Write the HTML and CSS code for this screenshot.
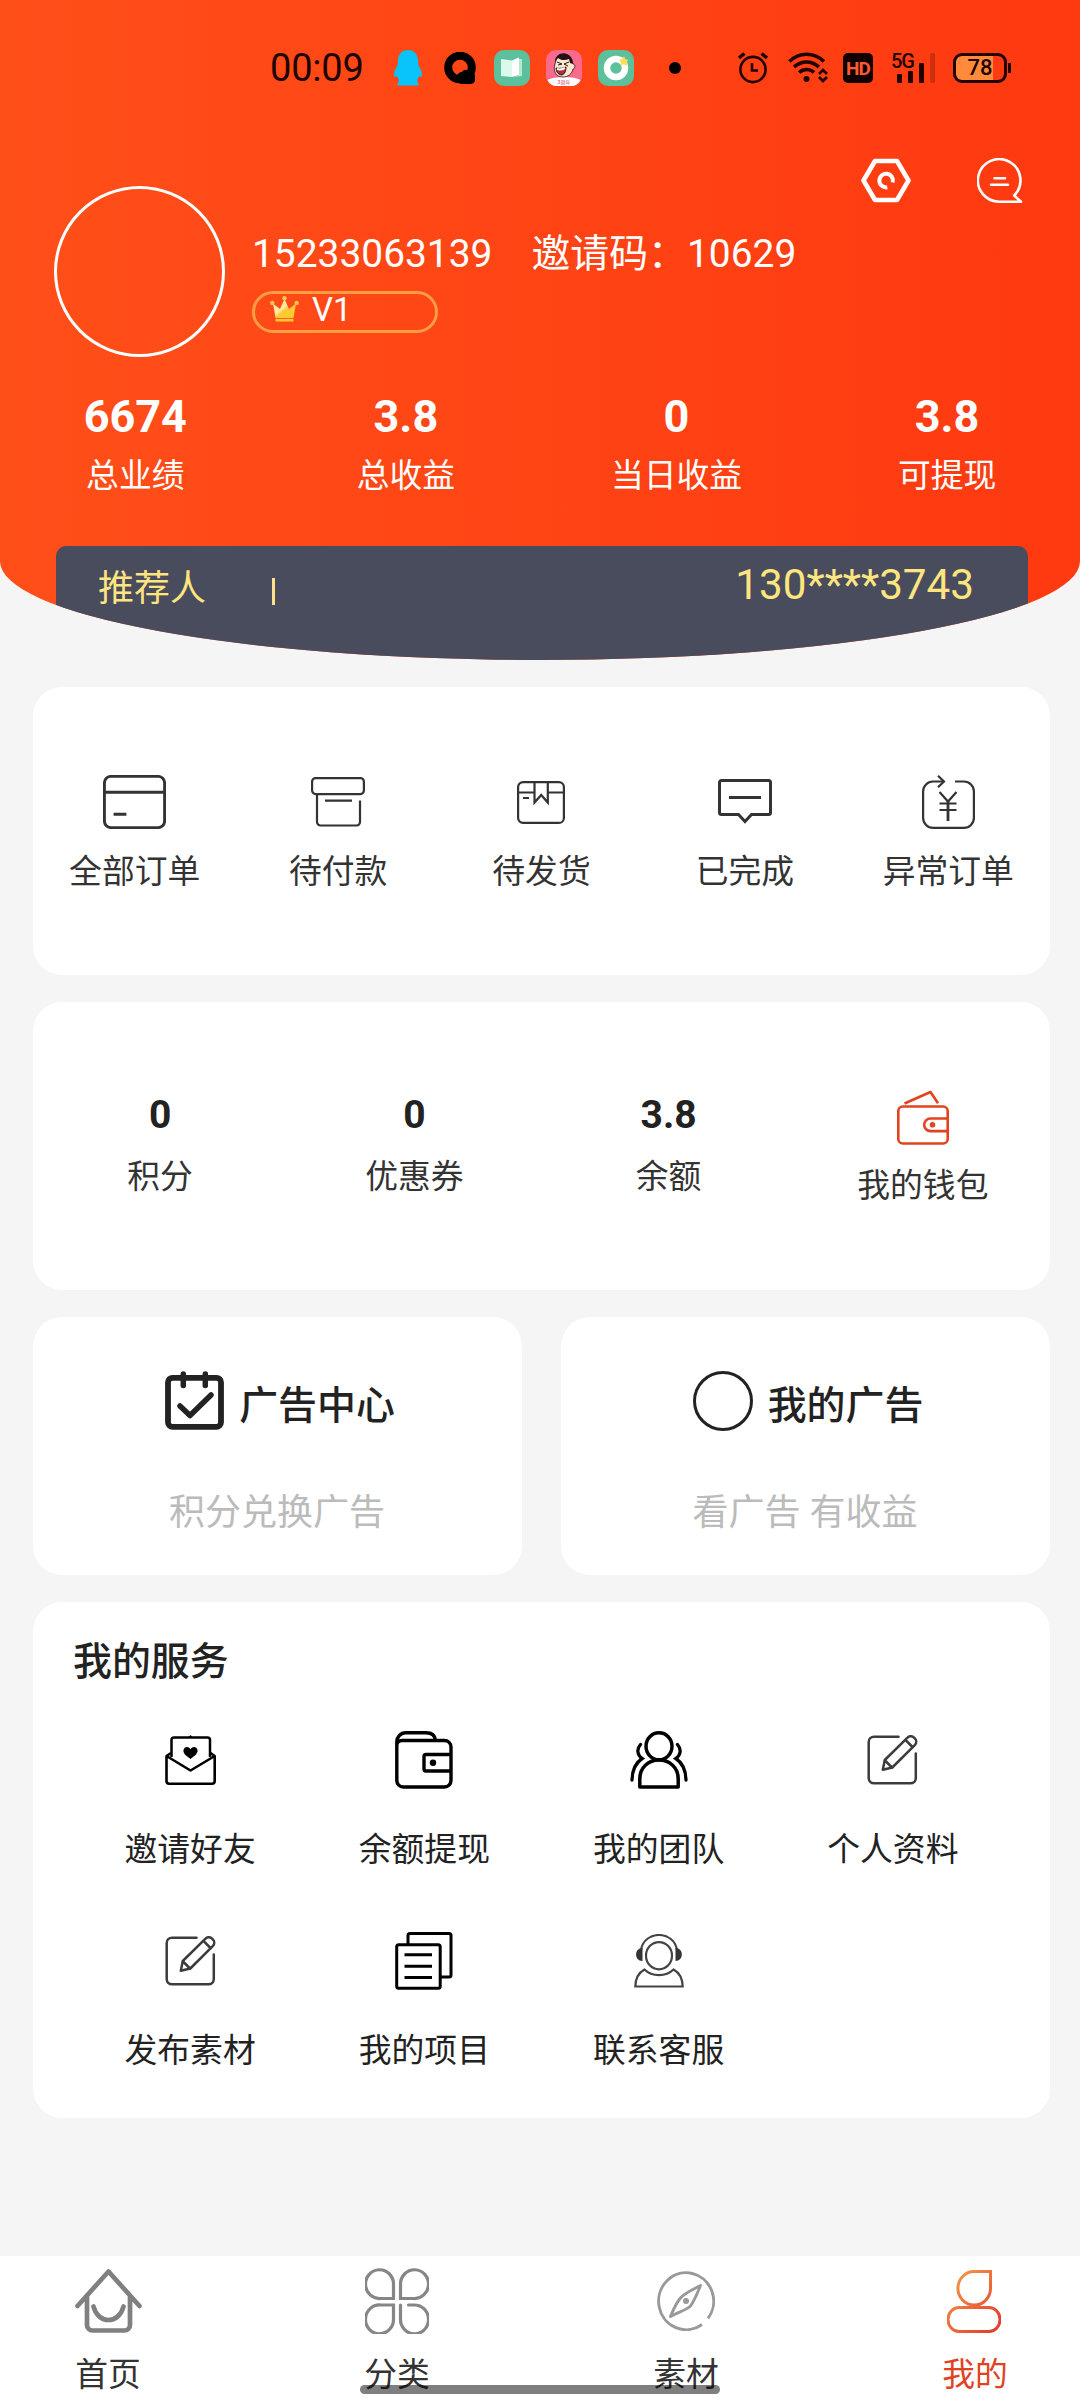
FILE: index.html
```html
<!DOCTYPE html>
<html lang="zh-CN">
<head>
<meta charset="utf-8">
<title>我的</title>
<link rel="stylesheet" href="styles.css">
</head>
<body>
<svg class="defs" width="0" height="0">
  <defs>
    <linearGradient id="me" x1="0" y1="0" x2="1" y2="1"><stop offset="0" stop-color="#f5a04a"/><stop offset="1" stop-color="#e2382c"/></linearGradient>
    <linearGradient id="gold" x1="0" y1="0" x2="1" y2="1"><stop offset="0.45" stop-color="#ffe9a0"/><stop offset="0.55" stop-color="#ffc933"/></linearGradient>
    <symbol id="edit" viewBox="0 0 51 50"><g fill="none" stroke="#3c3c3c" stroke-width="2.500" stroke-linecap="round" stroke-linejoin="round"><path d="M31.500 1.700H7a5.300 5.300 0 0 0-5.300 5.300V43a5.300 5.300 0 0 0 5.300 5.300H43.500a5.300 5.300 0 0 0 5.300-5.300V18.500"/><path d="M15.800 34.800 17.800 25 40.500 2.600a4.500 4.500 0 0 1 6.500 0l1 1a4.500 4.500 0 0 1 0 6.200L25.300 32.500Z"/><path d="M38.700 5.200 45.500 12M18 25.500l7 7"/></g></symbol>
  </defs>
</svg>

<header class="header">
  <div class="status">
    <span class="clock">00:09</span>
    <svg class="st-qq" width="30" height="36" viewBox="0 0 30 36" fill="#08c4f8"><path d="M15 0c6 0 9.500 4 10 10l.3 5c2 3 4 7.500 3.700 11-.3 1.300-1.500 1-3 0l-2 4.500 1.500 3.500v1.500H4.500V34L6 30.500 4 26c-1.500 1-2.700 1.300-3 0-.3-3.500 1.700-8 3.700-11L5 10C5.500 4 9 0 15 0Z"/></svg>
    <svg class="st-q" width="32" height="32" viewBox="0 0 32 32"><circle cx="16" cy="15.500" r="11.800" fill="none" stroke="#000" stroke-width="8"/><path d="M13 25c0-3 2.500-5 5-5 1-2.500 6-3.500 8 0 3 0 5 2 5 4v4c0 3-3 4-5 4H16Z"/></svg>
    <svg class="st-app" width="36" height="36" viewBox="0 0 36 36"><rect width="36" height="36" rx="10" fill="#5cc09c"/><path d="M7 9l11 1.500V27L7 26Z" fill="#ddf9ec"/><path d="M18 10.500 25 7.500V25l-7 2Z" fill="#fff"/><path d="M25 9h3v17l-10 1 7-2Z" fill="#b5e9cf"/></svg>
    <svg class="st-app" width="36" height="36" viewBox="0 0 36 36"><rect width="36" height="36" rx="10" fill="#fa6a8c"/><path d="M1.500 30C8 26 28 26 34.500 30c-2 4-5 6-9 6h-15c-4 0-7-2-9-6Z" fill="#fff"/><path d="M10 10c0-7 14-8 16 0l1 4c3 0 2 5 0 5-1 5-5 8-10 8C9 27 7 20 9 14Z" fill="#ffe7cf" stroke="#221214" stroke-width=".8"/><path d="M9 12C9 1 26-1 27 14l-3-1-1-4c-4 2-9 1-11-1Z" fill="#221214"/><path d="M11 12l5 2-4 1M23 12l-5 2 4 2" fill="none" stroke="#221214"/><path d="M10 18c4 1 7 0 10-1 0 5-2 8-5 8-3-1-5-3-5-7Z" fill="#b52d3a" stroke="#221214"/><path d="M11 19c3 1 6 0 8-1" stroke="#fff" stroke-width="2" fill="none"/><text x="18" y="33.500" text-anchor="middle" class="tiny">3周年</text></svg>
    <svg class="st-app" width="36" height="36" viewBox="0 0 36 36"><rect width="36" height="36" rx="10" fill="#5cc09c"/><circle cx="18" cy="18" r="9" fill="none" stroke="#fff" stroke-width="6.500"/><path d="M26 6l1.500 3.300 3 .5-2 2.400.5 3.500-3.500-1.500-3 1.500.5-3.500-2-2.700 3.300-.5Z" fill="#f9dd55"/></svg>
    <i class="st-dot"></i>
    <svg class="st-alarm" width="30" height="32" viewBox="0 0 30 32" fill="none" stroke="#200300" stroke-width="2.600"><circle cx="15" cy="17.500" r="12.600"/><path d="M14 11v7.500h6"/><path d="M1 6 6.500 1.500M29 6 23.500 1.500" stroke-width="3.500"/></svg>
    <svg class="st-wifi" width="40" height="32" viewBox="0 0 40 32" fill="none" stroke="#200300" stroke-width="3.600"><path d="M1.500 9.500C11-.2 26-.2 36 9.500M6 15C14 8.500 23 8.500 31 15M11 20.500c4.500-4 11-4 15 0"/><circle cx="18.500" cy="27" r="3" fill="#200300" stroke="none"/><path d="m31 22 4-4 4 4M31 25l4 4 4-4" stroke-width="2.800"/></svg>
    <span class="st-hd">HD</span>
    <svg class="st-sig" width="46" height="32" viewBox="0 0 46 32"><text x="0" y="16" class="five-g">5G</text><g fill="#200300"><rect x="6" y="22" width="5" height="9" rx="1"/><rect x="17" y="19" width="5" height="12" rx="1"/><rect x="28" y="11" width="5" height="20" rx="1"/><rect x="39" y="1" width="5" height="30" rx="1" opacity=".22"/></g></svg>
    <span class="st-batt">78</span><i class="st-nub"></i>
  </div>

  <div class="actions">
    <svg width="50" height="45" viewBox="0 0 50 45" fill="none" stroke="#fff" stroke-width="4.600" stroke-linejoin="round"><path d="M14 3H36L47.500 22.500 36 42H14L2.500 22.500Z"/><path d="M26.300 29.300A6.800 6.800 0 1 1 31.700 24.500" stroke-width="4" stroke-linecap="butt"/></svg>
    <svg width="46" height="45" viewBox="0 0 46 45" fill="none" stroke="#fff" stroke-width="2.600" stroke-linejoin="round" stroke-linecap="round"><path d="M37.200 37.500A21.300 21.300 0 1 0 23 43.700H44L37.200 37.500M17.500 20.300H28M14 26.700H31"/></svg>
  </div>

  <div class="profile">
    <div class="avatar"></div>
    <div class="info">
      <div class="ids"><span>15233063139</span><span>邀请码：10629</span></div>
      <div class="level">
        <svg width="29" height="26" viewBox="0 0 29 26"><path d="M3 7.500l7 5.500 4.500-10L19 13l7-5.500L23.500 22h-18Z" fill="url(#gold)"/><g fill="#ffc84a"><circle cx="2.300" cy="7" r="2.200"/><circle cx="14.500" cy="2.300" r="2.200"/><circle cx="26.700" cy="7" r="2.200"/></g><path d="M5.500 22.800h18v2.700h-18z" fill="#ffc933"/></svg>
        <span>V1</span>
      </div>
    </div>
  </div>

  <div class="stats">
    <div><b>6674</b><span>总业绩</span></div>
    <div><b>3.8</b><span>总收益</span></div>
    <div><b>0</b><span>当日收益</span></div>
    <div><b>3.8</b><span>可提现</span></div>
  </div>

  <div class="referrer"><span class="who">推荐人</span><i class="sep"></i><span class="phone">130****3743</span></div>
</header>

<main class="main">
  <section class="card orders">
    <div class="cell"><div class="ico"><svg width="63" height="54" viewBox="0 0 63 54" fill="none" stroke="#333" stroke-width="2.900"><rect x="1.400" y="1.400" width="60.200" height="51.200" rx="6.500"/><path d="M1 17.300H62M10.600 39.300H23.400"/></svg></div><span>全部订单</span></div>
    <div class="cell"><div class="ico"><svg width="54" height="50" viewBox="0 0 54 50" fill="none" stroke="#333" stroke-width="2.200"><rect x="1.100" y="1.100" width="51.800" height="16" rx="3.500"/><path d="M6 17V45a3.500 3.500 0 0 0 3.500 3.500H45.500A3.500 3.500 0 0 0 49 45V23.500M14 23.700H41"/></svg></div><span>待付款</span></div>
    <div class="cell"><div class="ico"><svg width="48" height="43" viewBox="0 0 48 43" fill="none" stroke="#333" stroke-width="2.200"><rect x="1.100" y="1.100" width="45.800" height="40.800" rx="5"/><path d="M1 11.500H17M31 11.500H47M17.500 1V21.500L24.200 14 30.800 21.500V1M6 17H12"/></svg></div><span>待发货</span></div>
    <div class="cell"><div class="ico"><svg width="54" height="46" viewBox="0 0 54 46" fill="none" stroke="#333" stroke-width="3"><path d="M20.500 35.500H3.500a2 2 0 0 1-2-2V3.500a2 2 0 0 1 2-2H50.500a2 2 0 0 1 2 2V33.500a2 2 0 0 1-2 2H33.500L27 42.500ZM11 18.500H43"/></svg></div><span>已完成</span></div>
    <div class="cell"><div class="ico"><svg width="53" height="54" viewBox="0 0 53 54" fill="none" stroke="#333" stroke-width="2.200"><path d="M22 6.500H11A10 10 0 0 0 1.100 16.500V43a10 10 0 0 0 10 9.900H42A10 10 0 0 0 51.900 43V16.500A10 10 0 0 0 42 6.500H33"/><path d="M16 .8 22 6.500 16 12.200M17.500 17 26 26.500 34.500 17M17.500 28.500H34.500M17.500 35H34.500"/><path d="M26 26V46" stroke-width="2.800"/></svg></div><span>异常订单</span></div>
  </section>

  <section class="card assets">
    <div class="cell"><b>0</b><span>积分</span></div>
    <div class="cell"><b>0</b><span>优惠券</span></div>
    <div class="cell"><b>3.8</b><span>余额</span></div>
    <div class="cell wallet"><svg width="52" height="55" viewBox="0 0 52 55" fill="none" stroke="#e2431f" stroke-width="2.600"><rect x="1.300" y="16.500" width="49.400" height="37" rx="4.500"/><path d="M7.500 13.500 33.500 2 41 13.200M50.500 28.500H33.500a6.300 6.300 0 0 0 0 12.600H50.500" stroke-linejoin="round"/><circle cx="35.500" cy="34.800" r="2.800" fill="#e2431f" stroke="none"/></svg><span>我的钱包</span></div>
  </section>

  <section class="ads">
    <div class="card ad">
      <div class="ad-title"><svg width="59" height="60" viewBox="0 0 59 60" fill="none" stroke="#222" stroke-width="5.800" stroke-linecap="round" stroke-linejoin="round"><rect x="3" y="6.800" width="53" height="49" rx="4.500"/><path d="M18.300 3V14.500M40.300 3V14.500M15 35 25 44.500 46 24" stroke-width="5.500"/></svg><h3>广告中心</h3></div>
      <p>积分兑换广告</p>
    </div>
    <div class="card ad">
      <div class="ad-title"><i class="ring"></i><h3>我的广告</h3></div>
      <p>看广告 有收益</p>
    </div>
  </section>

  <section class="card services">
    <h3>我的服务</h3>
    <div class="grid">
      <div class="svc"><div class="ico"><svg width="51" height="50" viewBox="0 0 51 50" fill="none" stroke="#000" stroke-width="2.500" stroke-linejoin="round"><path d="M6.500 22V5a2.500 2.500 0 0 1 2.500-2.500H42.500A2.500 2.500 0 0 1 45 5V22"/><path d="M6 18 1.500 21V46a2.700 2.700 0 0 0 2.700 2.700H47A2.700 2.700 0 0 0 49.700 46V21L45.500 18M1.500 21 25.500 35.500 49.700 21" stroke-width="2.600"/><path d="M25.500 24C20 20 18 18 18.500 15c.7-3.500 5-4 7-.8 2-3.200 6.300-2.700 7 .8.500 3-1.500 5-7 9ZM23.500 2h4l-2-2Z" fill="#000" stroke="none"/></svg></div><span>邀请好友</span></div>
      <div class="svc"><div class="ico"><svg width="58" height="58" viewBox="0 0 58 58" fill="none" stroke="#000" stroke-width="3.400"><path d="M1.800 14V49.500a6.500 6.500 0 0 0 6.500 6.500H49.500a6.500 6.500 0 0 0 6.500-6.500V16a6.500 6.500 0 0 0-6.500-6.500H7C3.500 9.500 2 12 1.800 14ZM1.800 15V11A9 9 0 0 1 10.800 1.800H31C37 1.800 40 4 40.500 9.500M56 23.500H31a2 2 0 0 0-2 2V38a2 2 0 0 0 2 2H56"/><circle cx="38" cy="31.800" r="3.200" fill="#000" stroke="none"/></svg></div><span>余额提现</span></div>
      <div class="svc"><div class="ico"><svg width="58" height="58" viewBox="0 0 58 58" fill="none" stroke="#000" stroke-width="3.500" stroke-linecap="round"><ellipse cx="29" cy="15.300" rx="13" ry="13.500"/><path d="M9.800 56H48.200V48C48.200 36 39 29 29 29S9.800 36 9.800 48Z" stroke-linejoin="round"/><path d="M10.500 13.500C6.500 18 7 24 12.200 27.500 6 31.500 2.200 39 2 49M47.500 13.500C51.500 18 51 24 45.800 27.500 52 31.500 55.800 39 56 49" stroke-width="3.300"/></svg></div><span>我的团队</span></div>
      <div class="svc"><div class="ico"><svg width="51" height="50"><use href="#edit"/></svg></div><span>个人资料</span></div>
      <div class="svc"><div class="ico"><svg width="51" height="50"><use href="#edit"/></svg></div><span>发布素材</span></div>
      <div class="svc"><div class="ico"><svg width="58" height="58" viewBox="0 0 58 58" fill="none" stroke="#000" stroke-width="3"><path d="M13 12.500V3.500a2 2 0 0 1 2-2H54a2 2 0 0 1 2 2V43a2 2 0 0 1-2 2H46"/><rect x="1.700" y="12.700" width="43.500" height="43.500" rx="2"/><path d="M9.500 22.800H37M9.500 34.300H37M9.500 45.600H37"/></svg></div><span>我的项目</span></div>
      <div class="svc"><div class="ico"><svg width="50" height="54" viewBox="0 0 50 54" fill="none" stroke="#444" stroke-width="2.200"><ellipse cx="25" cy="21.700" rx="13" ry="13.600"/><path d="M7 16C10-4 40-4 43 16M1.300 52.500C1.500 44 5 38.500 10.500 35.500 18 43 32 43 39.500 35.500 45 38.500 48.500 44 48.700 52.500Z"/><path d="M8.500 14V27C0 27 0 14 8.500 14ZM41.500 14V27C50 27 50 14 41.500 14Z" fill="#333" stroke="none"/></svg></div><span>联系客服</span></div>
    </div>
  </section>
</main>

<nav class="tabs">
  <div class="tab"><div class="tico"><svg width="67" height="66" viewBox="0 0 67 66" fill="none" stroke="#808080" stroke-width="4.700" stroke-linecap="round" stroke-linejoin="round"><path d="M2.500 38 33.500 3.500 64.500 38M12 29V57a5.500 5.500 0 0 0 5.500 5.500H49.500A5.500 5.500 0 0 0 55 57V29M18.500 38.500C23 56.500 44 56.500 48.500 38.500"/></svg></div><span>首页</span></div>
  <div class="tab"><div class="tico"><svg width="64" height="66" viewBox="0 0 64 66" fill="none" stroke="#868686" stroke-width="3.200" stroke-linecap="round"><path d="M28.500 30.500H15.500A14 14.400 0 1 1 28.500 16ZM35.500 30.500H48.500A14 14.400 0 1 0 35.500 16ZM28.500 37H15.500A14 14.400 0 1 0 28.500 51ZM35.500 37V51A14 14.400 0 1 0 49 37H43.500"/></svg></div><span>分类</span></div>
  <div class="tab"><div class="tico"><svg width="58" height="60" viewBox="0 0 58 60" fill="none" stroke="#999" stroke-width="2.900" stroke-linejoin="round"><path d="M51 47.500A27.500 28.500 0 1 0 45 53.500"/><path d="M43.500 14.500C40 23 37 31 33 35.500 29 39 21 41.500 13.500 45.500 17 37 20 29.500 25 25.500 30 21 36 18.500 43.500 14.500Z"/><circle cx="29" cy="30" r="3" fill="#999" stroke="none"/></svg></div><span>素材</span></div>
  <div class="tab active"><div class="tico"><svg width="54" height="63" viewBox="0 0 54 63" fill="none" stroke="url(#me)" stroke-width="3"><path d="M43.500 1.500V18.500A16.300 16.800 0 1 1 27.500 1.500ZM12 37.500H42A11 12 0 0 1 42 61.500H12A11 12 0 0 1 12 37.500Z"/></svg></div><span>我的</span></div>
  <i class="home-bar"></i>
</nav>
</body>
</html>
```

FILE: styles.css
```css
* { box-sizing: border-box; }
body {
  margin: 0;
  width: 1080px;
  height: 2400px;
  display: flex;
  flex-direction: column;
  background: #f5f5f5;
  color: #333;
  font-family: Roboto, "Noto Sans CJK SC", sans-serif;
  font-size: 32.8px;
  overflow: hidden;
}
svg { display: block; flex: none; }
i { display: block; flex: none; }
h3, p { margin: 0; }
.defs { position: absolute; }

/* header */
.header {
  height: 660px;
  flex: none;
  overflow: hidden;
  background: linear-gradient(90deg, #ff4f19, #ff3910);
  border-radius: 0 0 50% 50% / 0 0 15% 15%;
  color: #fff;
}
.status {
  display: flex;
  align-items: center;
  height: 36px;
  margin-top: 50px;
  padding-left: 270px;
  color: #200300;
}
.clock { width: 123px; font-size: 38px; line-height: 36px; letter-spacing: -0.2px; }
.st-q { margin-left: 21px; }
.st-app { margin-left: 18px; }
.st-app + .st-app { margin-left: 16px; }
.st-dot { width: 12px; height: 12px; margin-left: 35px; border-radius: 50%; background: #000; }
.st-alarm { margin-left: 57px; }
.st-wifi { margin-left: 20px; }
.st-hd {
  width: 30px; height: 30px; margin-left: 15px;
  border-radius: 5px; background: #100; color: #ff5a30;
  font-size: 19px; font-weight: 700; line-height: 31px; text-align: center; letter-spacing: -1px;
}
.st-sig { margin-left: 18px; }
.five-g { font-size: 20px; font-weight: 500; fill: #200300; letter-spacing: -1px; }
.tiny { font-size: 5px; fill: #d03a60; }
.st-batt {
  width: 54px; height: 30px; margin-left: 16px;
  border: 3px solid #200300; border-radius: 9px;
  background: linear-gradient(90deg, #ff8a3c 78%, transparent 78%);
  font-size: 22px; font-weight: 500; line-height: 24px; text-align: center;
}
.st-nub { width: 3px; height: 10px; margin-left: 1px; background: #200300; }

.actions {
  display: flex;
  justify-content: flex-end;
  gap: 66px;
  height: 45px;
  margin-top: 72px;
  padding-right: 57px;
}
.profile { display: flex; height: 171px; margin-top: -17px; padding-left: 54px; }
.avatar { width: 171px; height: 171px; border: 3px solid #fff; border-radius: 50%; }
.info { margin-left: 27px; padding-top: 42px; }
.ids { display: flex; gap: 39px; height: 52px; font-size: 38.9px; line-height: 52px; white-space: nowrap; }
.level {
  display: flex;
  align-items: flex-start;
  width: 186px; height: 42px;
  margin-top: 11px;
  padding: 2px 0 0 15px;
  border: 3px solid #ff9d45; border-radius: 21px;
  font-size: 33px; line-height: 33px;
}
.level span { margin: -3px 0 0 13px; }
.stats { display: grid; grid-template-columns: repeat(4, 270.6px); margin-top: 35px; text-align: center; }
.stats b { display: block; font-size: 45px; line-height: 50px; }
.stats span { display: block; margin-top: 14px; line-height: 40px; }
.referrer {
  display: flex;
  height: 114px;
  margin: 50px 52px 0 56px;
  padding: 16px 54px 0 42px;
  border-radius: 10px 10px 0 0;
  background: #484c5c;
  color: #ffe57f;
  font-size: 36px; line-height: 50px;
}
.who { padding-top: 2px; }
.sep { width: 3px; height: 27px; margin: 16px 0 0 66px; background: #ffe28a; }
.phone { margin-left: auto; font-size: 42.2px; line-height: 46px; }

/* cards */
.main { display: flex; flex-direction: column; flex: 1; padding: 27px 30px 0 33px; gap: 27px; }
.card { border-radius: 29px; background: #fff; }
.orders, .assets { display: grid; height: 288px; }
.orders { grid-template-columns: repeat(5, 1fr); padding-top: 83px; }
.assets { grid-template-columns: repeat(4, 1fr); padding-top: 88px; }
.cell { display: flex; flex-direction: column; align-items: center; }
.cell span { line-height: 40px; }
.orders .ico { display: flex; align-items: center; height: 64px; margin-bottom: 18px; }
.assets b { margin-bottom: 17px; color: #222; font-size: 39px; line-height: 50px; }
.wallet svg { margin: 0 0 21px; }

.ads { display: grid; grid-template-columns: 1fr 1fr; gap: 39px; height: 258px; }
.ad { display: flex; flex-direction: column; align-items: center; padding-top: 53px; }
.ad-title { display: flex; align-items: center; height: 62px; padding-left: 5px; }
.ad-title h3, .services h3 { color: #222; font-size: 38.9px; font-weight: 500; line-height: 50px; }
.ad-title h3 { margin: 9px 0 0 15px; }
.ring { width: 60px; height: 60px; border: 3px solid #222; border-radius: 50%; }
.ad p { margin-top: 56px; margin-right: 1px; color: #bbb; font-size: 36px; line-height: 50px; }

.services { height: 516px; padding: 35px 40px 0; }
.grid { display: grid; grid-template-columns: repeat(4, 1fr); grid-auto-rows: 201px; padding-top: 41px; }
.svc { display: flex; flex-direction: column; align-items: center; color: #222; }
.svc .ico { display: flex; align-items: center; height: 64px; margin-bottom: 38px; }
.svc span { line-height: 40px; }

/* tab bar */
.tabs {
  position: relative;
  display: flex;
  flex: none;
  height: 144px;
  justify-content: space-between;
  background: #fff;
  padding: 10px 50px 0 53px;
}
.tab { display: flex; flex-direction: column; align-items: center; width: 110px; }
.tico { display: flex; align-items: center; height: 70px; }
.tab span { margin-top: 19px; line-height: 40px; }
.active .tico { padding-right: 2px; }
.active span { color: #e2431f; }
.home-bar {
  position: absolute;
  left: 360px; bottom: 6px;
  width: 360px; height: 9px;
  border-radius: 5px;
  background: rgba(0, 0, 0, 0.5);
}
```
